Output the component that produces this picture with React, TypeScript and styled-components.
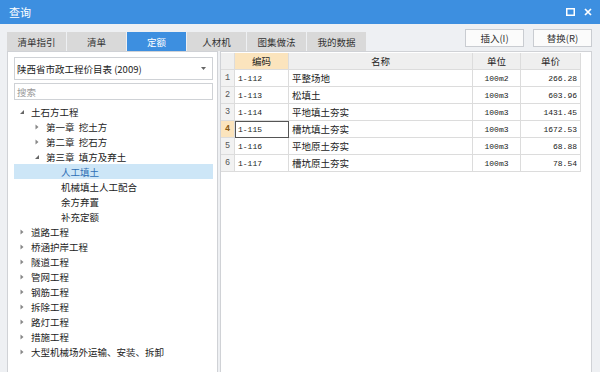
import React from "react";
import styled, { createGlobalStyle, css } from "styled-components";

const FONT = `"Noto Sans CJK SC", "Noto Sans", sans-serif`;
const MONO = `"Liberation Mono", "Noto Sans CJK SC", monospace`;

const GlobalStyle = createGlobalStyle`
  html, body { margin: 0; padding: 0; background: #fff; }
  * { box-sizing: border-box; }
`;

const Window = styled.div`
  width: 600px;
  height: 372px;
  display: flex;
  flex-direction: column;
  background: #eef0f3;
  font-family: ${FONT};
  color: #222;
  overflow: hidden;
`;

const TitleBar = styled.div`
  height: 24px;
  flex: none;
  display: flex;
  align-items: center;
  padding: 0 8px 0 9px;
  background: #3d8fe0;
  color: #fff;
  font-size: 11px;
`;

const Title = styled.div`
  flex: 1;
`;

const WinButtons = styled.div`
  display: flex;
  align-items: center;
  gap: 9px;
`;

const TopRow = styled.div`
  height: 27px;
  flex: none;
  display: flex;
  align-items: flex-end;
  padding: 0 8px 0 7px;
`;

const Tabs = styled.div`
  display: flex;
  gap: 1px;
  flex: 1;
`;

const Tab = styled.div<{ $active?: boolean }>`
  width: 59px;
  height: 19px;
  display: flex;
  align-items: center;
  justify-content: center;
  font-size: 9.5px;
  background: #d9d9d9;
  color: #333;
  ${({ $active }) =>
    $active &&
    css`
      background: #3d8fe0;
      color: #fff;
    `}
`;

const Actions = styled.div`
  display: flex;
  gap: 9px;
  align-self: flex-start;
  margin-top: 5px;
`;

const ActionButton = styled.div`
  width: 59px;
  height: 18px;
  display: flex;
  align-items: center;
  justify-content: center;
  font-size: 9.5px;
  background: #fbfbfb;
  border: 1px solid #c9ccd1;
  color: #333;
`;

const Content = styled.div`
  flex: 1;
  display: flex;
  gap: 2px;
  padding: 0 8px 0 7px;
  min-height: 0;
`;

const LeftPanel = styled.div`
  width: 211px;
  background: #fff;
  border: 1px solid #d0d2d6;
  border-bottom: none;
  padding: 5px 4px 0 6px;
  display: flex;
  flex-direction: column;
`;

const Select = styled.div`
  height: 23px;
  display: flex;
  align-items: center;
  justify-content: space-between;
  padding: 0 6px 0 2px;
  border: 1px solid #cfd2d6;
  font-size: 9.5px;
`;

const SearchBox = styled.div`
  height: 17px;
  margin-top: 3px;
  display: flex;
  align-items: center;
  padding: 0 2px;
  border: 1px solid #cfd2d6;
  font-size: 9.5px;
  color: #999;
`;

const Tree = styled.div`
  margin-top: 4px;
  display: flex;
  flex-direction: column;
`;

const TreeRow = styled.div<{ $level: number; $selected?: boolean }>`
  height: 15px;
  display: flex;
  align-items: center;
  padding-left: ${({ $level }) => 5 + $level * 15}px;
  font-size: 9.5px;
  color: #222;
  white-space: pre;
  ${({ $selected }) =>
    $selected &&
    css`
      background: #cde6f7;
      color: #2f6fb5;
    `}
`;

const Arrow = styled.span`
  width: 12px;
  flex: none;
  display: flex;
  align-items: center;
`;

const RightPanel = styled.div`
  flex: 1;
  background: #fff;
  border: 1px solid #d0d2d6;
  border-bottom: none;
  padding: 1px 0 0 0;
`;

const Grid = styled.div`
  display: grid;
  grid-template-columns: 14px 54px 184px 48px 60px;
  grid-auto-rows: 17px;
  width: 360px;
`;

const HeadCell = styled.div<{ $hot?: boolean }>`
  display: flex;
  align-items: center;
  justify-content: center;
  font-size: 9.5px;
  background: ${({ $hot }) => ($hot ? "#fbe4bd" : "#efefef")};
  border-right: 1px solid #dcdcdc;
  border-bottom: 1px solid #dcdcdc;
`;

const RowNum = styled.div<{ $hot?: boolean }>`
  display: flex;
  align-items: center;
  justify-content: center;
  font-family: ${MONO};
  font-size: 8.5px;
  color: ${({ $hot }) => ($hot ? "#8a5a10" : "#555")};
  font-weight: ${({ $hot }) => ($hot ? 700 : 400)};
  background: ${({ $hot }) => ($hot ? "#fbe4bd" : "#f2f2f2")};
  border-right: 1px solid #dcdcdc;
  border-bottom: 1px solid #dcdcdc;
`;

const Cell = styled.div<{ $align?: "left" | "right" | "center"; $mono?: boolean; $active?: boolean }>`
  display: flex;
  align-items: center;
  justify-content: ${({ $align }) =>
    $align === "right" ? "flex-end" : $align === "center" ? "center" : "flex-start"};
  padding: 0 3px;
  font-family: ${({ $mono }) => ($mono ? MONO : FONT)};
  font-size: ${({ $mono }) => ($mono ? "8px" : "9.5px")};
  color: #222;
  border-right: 1px solid #dcdcdc;
  border-bottom: 1px solid #dcdcdc;
  ${({ $active }) =>
    $active &&
    css`
      outline: 1px solid #555;
      outline-offset: -1px;
    `}
`;

const Tri = ({ open }: { open?: boolean }) => (
  <svg width="6" height="6" viewBox="0 0 6 6">
    {open ? (
      <path d="M5 1 L5 5 L1 5 Z" fill="#666" />
    ) : (
      <path d="M1.5 0.5 L4.5 3 L1.5 5.5 Z" fill="#888" />
    )}
  </svg>
);

const tree: { label: string; level: number; arrow?: "open" | "closed"; selected?: boolean }[] = [
  { label: "土石方工程", level: 0, arrow: "open" },
  { label: "第一章  挖土方", level: 1, arrow: "closed" },
  { label: "第二章  挖石方", level: 1, arrow: "closed" },
  { label: "第三章  填方及弃土", level: 1, arrow: "open" },
  { label: "人工填土", level: 2, selected: true },
  { label: "机械填土人工配合", level: 2 },
  { label: "余方弃置", level: 2 },
  { label: "补充定额", level: 2 },
  { label: "道路工程", level: 0, arrow: "closed" },
  { label: "桥涵护岸工程", level: 0, arrow: "closed" },
  { label: "隧道工程", level: 0, arrow: "closed" },
  { label: "管网工程", level: 0, arrow: "closed" },
  { label: "钢筋工程", level: 0, arrow: "closed" },
  { label: "拆除工程", level: 0, arrow: "closed" },
  { label: "路灯工程", level: 0, arrow: "closed" },
  { label: "措施工程", level: 0, arrow: "closed" },
  { label: "大型机械场外运输、安装、拆卸", level: 0, arrow: "closed" },
];

const rows = [
  ["1-112", "平整场地", "100m2", "266.28"],
  ["1-113", "松填土", "100m3", "603.96"],
  ["1-114", "平地填土夯实", "100m3", "1431.45"],
  ["1-115", "槽坑填土夯实", "100m3", "1672.53"],
  ["1-116", "平地原土夯实", "100m3", "68.88"],
  ["1-117", "槽坑原土夯实", "100m3", "78.54"],
];

const tabs = ["清单指引", "清单", "定额", "人材机", "图集做法", "我的数据"];

export default function App() {
  return (
    <>
      <GlobalStyle />
      <Window>
        <TitleBar>
          <Title>查询</Title>
          <WinButtons>
            <svg width="9" height="8" viewBox="0 0 9 8">
              <rect x="0.75" y="0.75" width="7.5" height="6.5" fill="none" stroke="#fff" strokeWidth="1.5" />
            </svg>
            <svg width="8" height="8" viewBox="0 0 8 8">
              <path d="M1 1 L7 7 M7 1 L1 7" stroke="#fff" strokeWidth="1.7" />
            </svg>
          </WinButtons>
        </TitleBar>
        <TopRow>
          <Tabs>
            {tabs.map((t) => (
              <Tab key={t} $active={t === "定额"}>
                {t}
              </Tab>
            ))}
          </Tabs>
          <Actions>
            <ActionButton>插入(I)</ActionButton>
            <ActionButton>替换(R)</ActionButton>
          </Actions>
        </TopRow>
        <Content>
          <LeftPanel>
            <Select>
              <span>陕西省市政工程价目表 (2009)</span>
              <svg width="5" height="3" viewBox="0 0 5 3">
                <path d="M0 0 L5 0 L2.5 3 Z" fill="#666" />
              </svg>
            </Select>
            <SearchBox>搜索</SearchBox>
            <Tree>
              {tree.map((n) => (
                <TreeRow key={n.label} $level={n.level} $selected={n.selected}>
                  <Arrow>{n.arrow && <Tri open={n.arrow === "open"} />}</Arrow>
                  {n.label}
                </TreeRow>
              ))}
            </Tree>
          </LeftPanel>
          <RightPanel>
            <Grid>
              <HeadCell />
              <HeadCell $hot>编码</HeadCell>
              <HeadCell>名称</HeadCell>
              <HeadCell>单位</HeadCell>
              <HeadCell>单价</HeadCell>
              {rows.map((r, i) => (
                <React.Fragment key={r[0]}>
                  <RowNum $hot={i === 3}>{i + 1}</RowNum>
                  <Cell $mono $active={i === 3}>{r[0]}</Cell>
                  <Cell>{r[1]}</Cell>
                  <Cell $mono $align="center">{r[2]}</Cell>
                  <Cell $mono $align="right">{r[3]}</Cell>
                </React.Fragment>
              ))}
            </Grid>
          </RightPanel>
        </Content>
      </Window>
    </>
  );
}
